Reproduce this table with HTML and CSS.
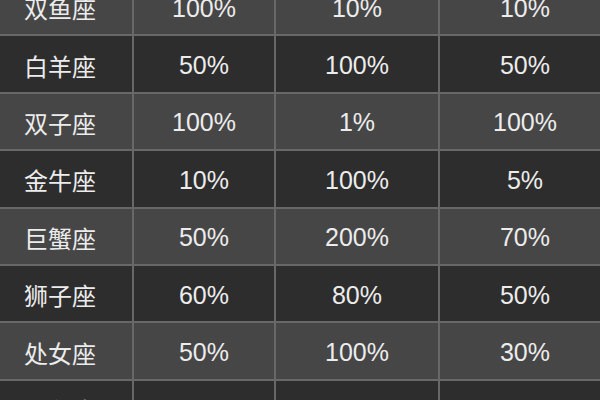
FILE: index.html
```html
<!DOCTYPE html>
<html lang="zh">
<head>
<meta charset="utf-8">
<link rel="stylesheet" href="styles.css">
</head>
<body>
<div class="table">
  <div class="row light"><div class="cell name">双鱼座</div><div class="cell">100%</div><div class="cell">10%</div><div class="cell">10%</div></div>
  <div class="row dark"><div class="cell name">白羊座</div><div class="cell">50%</div><div class="cell">100%</div><div class="cell">50%</div></div>
  <div class="row light"><div class="cell name">双子座</div><div class="cell">100%</div><div class="cell">1%</div><div class="cell">100%</div></div>
  <div class="row dark"><div class="cell name">金牛座</div><div class="cell">10%</div><div class="cell">100%</div><div class="cell">5%</div></div>
  <div class="row light"><div class="cell name">巨蟹座</div><div class="cell">50%</div><div class="cell">200%</div><div class="cell">70%</div></div>
  <div class="row dark"><div class="cell name">狮子座</div><div class="cell">60%</div><div class="cell">80%</div><div class="cell">50%</div></div>
  <div class="row light"><div class="cell name">处女座</div><div class="cell">50%</div><div class="cell">100%</div><div class="cell">30%</div></div>
  <div class="row dark"><div class="cell name">天秤座</div><div class="cell">80%</div><div class="cell">50%</div><div class="cell">60%</div></div>
</div>
</body>
</html>
```
FILE: styles.css
```css
html, body {
  margin: 0;
  padding: 0;
  width: 600px;
  height: 400px;
  overflow: hidden;
  background: #2d2d2d;
}
.table {
  margin-top: -21px;
  width: 610px;
  font-family: "Liberation Sans", "Noto Sans CJK SC", sans-serif;
  font-size: 25px;
  color: #ececec;
}
.row {
  display: grid;
  grid-template-columns: 134px 142px 164px 1fr;
  height: 57.4px;
  box-sizing: border-box;
  border-bottom: 2px solid #686868;
}
.row.light { background: #464646; }
.row.dark { background: #2d2d2d; }
.cell {
  display: flex;
  align-items: center;
  justify-content: center;
  padding-top: 3px;
  border-right: 2px solid #686868;
  line-height: 1;
}
.cell:last-child { border-right: none; }
.cell.name {
  padding-right: 12px;
  font-family: "Noto Sans CJK SC", sans-serif;
  font-size: 24px;
  font-weight: 400;
}
```
